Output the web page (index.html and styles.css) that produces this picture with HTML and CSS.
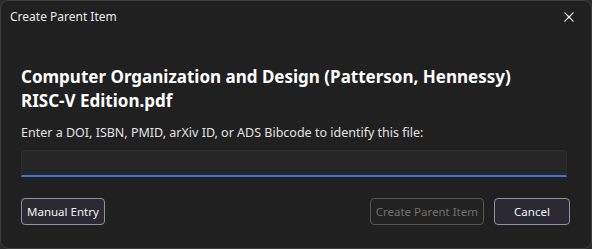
FILE: index.html
```html
<!DOCTYPE html>
<html lang="en">
<head>
    <meta charset="UTF-8">
    <title>Create Parent Item</title>
    <link rel="stylesheet" href="styles.css">
</head>
<body>
    <div class="dialog">
        <div class="titlebar">
            <span class="title">Create Parent Item</span>
            <button class="close" aria-label="Close">
                <svg width="10" height="10" viewBox="0 0 10 10">
                    <path d="M0.5 0.5 L9.5 9.5 M9.5 0.5 L0.5 9.5" stroke="#f0f0f0" stroke-width="1.1" fill="none"/>
                </svg>
            </button>
        </div>

        <div class="content">
            <h1 class="filename">Computer Organization and Design (Patterson, Hennessy) RISC-V Edition.pdf</h1>
            <label class="hint" for="ident">Enter a DOI, ISBN, PMID, arXiv ID, or ADS Bibcode to identify this file:</label>
            <input class="ident" id="ident" type="text">

            <div class="actions">
                <button class="btn">Manual Entry</button>
                <div class="actions-right">
                    <button class="btn" disabled>Create Parent Item</button>
                    <button class="btn btn-cancel">Cancel</button>
                </div>
            </div>
        </div>
    </div>
</body>
</html>
```

FILE: styles.css
```css
* {
    margin: 0;
    padding: 0;
    box-sizing: border-box;
}

body {
    background: #2a2a2a;
    font-family: 'Noto Sans', 'Open Sans', sans-serif;
    color: #e6e6e6;
}

/* Window */
.dialog {
    width: 592px;
    height: 249px;
    background: #202020;
    border: 1px solid #3d3d3d;
    border-radius: 8px;
    display: flex;
    flex-direction: column;
}

.titlebar {
    height: 31px;
    display: flex;
    align-items: center;
    justify-content: space-between;
    padding-left: 9px;
}

.title {
    font-size: 12px;
    color: #e8e8e8;
}

.close {
    width: 46px;
    height: 30px;
    background: none;
    border: none;
    display: flex;
    align-items: center;
    justify-content: center;
    padding-left: 2px;
}

/* Body */
.content {
    padding: 33px 20px 0 20px;
    display: flex;
    flex-direction: column;
}

.filename {
    font-size: 17px;
    font-weight: bold;
    line-height: 24px;
    color: #ffffff;
    padding-right: 40px;
}

.hint {
    font-size: 12.5px;
    line-height: 18px;
    margin-top: 11px;
    color: #e2e2e2;
}

.ident {
    margin-top: 8px;
    width: 546px;
    height: 27px;
    background: #262626;
    border: 1px solid #2e2e2e;
    border-bottom: 2px solid #3e74e0;
    border-radius: 3px 3px 0 0;
    outline: none;
}

/* Buttons */
.actions {
    margin-top: 21px;
    display: flex;
    justify-content: space-between;
    padding-right: 1px;
}

.actions-right {
    display: flex;
    gap: 10px;
}

.btn {
    height: 27px;
    padding: 0 5px;
    font-family: inherit;
    font-size: 11.5px;
    color: #f2f2f2;
    background: #2b2a33;
    border: 1px solid #8f8f9d;
    border-radius: 4px;
}

.btn:disabled {
    color: #6f6f6f;
    background: #222222;
    border-color: #555555;
}

.btn-cancel {
    width: 76px;
}
```
